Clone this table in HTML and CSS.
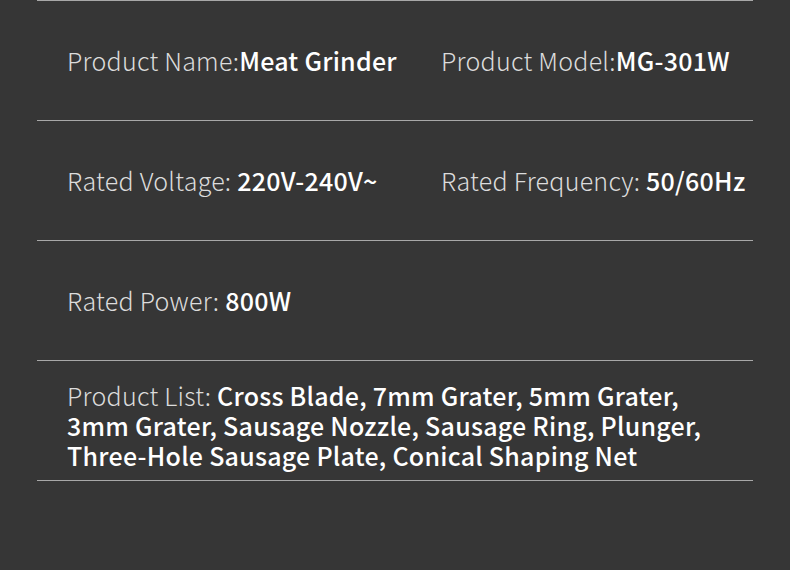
FILE: index.html
```html
<!DOCTYPE html>
<html>
<head>
<meta charset="utf-8">
<link rel="stylesheet" href="styles.css">
</head>
<body>
<div class="specs">
  <div class="row">
    <div class="cell"><span class="label">Product Name:</span><span class="value">Meat Grinder</span></div>
    <div class="cell"><span class="label">Product Model:</span><span class="value">MG-301W</span></div>
  </div>
  <div class="row">
    <div class="cell"><span class="label">Rated Voltage: </span><span class="value">220V-240V~</span></div>
    <div class="cell"><span class="label">Rated Frequency: </span><span class="value">50/60Hz</span></div>
  </div>
  <div class="row">
    <div class="cell"><span class="label">Rated Power: </span><span class="value">800W</span></div>
  </div>
  <div class="row list">
    <div class="cell wide"><span class="label">Product List: </span><span class="value">Cross Blade, 7mm Grater, 5mm Grater,<br>3mm Grater, Sausage Nozzle, Sausage Ring, Plunger,<br>Three-Hole Sausage Plate, Conical Shaping Net</span></div>
  </div>
</div>
</body>
</html>
```
FILE: styles.css
```css
html, body {
  margin: 0;
  padding: 0;
  background: #363636;
}
body {
  width: 790px;
  height: 570px;
  overflow: hidden;
  font-family: "Noto Sans CJK SC", "Noto Sans", sans-serif;
}
.specs {
  margin: 0 37px 0 37px;
  border-top: 1px solid #a8a8a8;
}
.row {
  display: flex;
  align-items: center;
  height: 117px;
  padding-bottom: 2px;
  border-bottom: 1px solid #a8a8a8;
  padding-left: 30px;
}
.cell {
  flex: 0 0 374px;
  font-size: 25px;
  line-height: 30px;
  letter-spacing: 0.25px;
  white-space: nowrap;
}
.cell.wide {
  flex: 0 0 auto;
}
.label {
  color: #dcdcdc;
  font-weight: 300;
}
.value {
  color: #ffffff;
  font-weight: 500;
}
.row.list {
  align-items: flex-start;
  height: auto;
  padding-top: 19px;
  padding-bottom: 10px;
}
```
